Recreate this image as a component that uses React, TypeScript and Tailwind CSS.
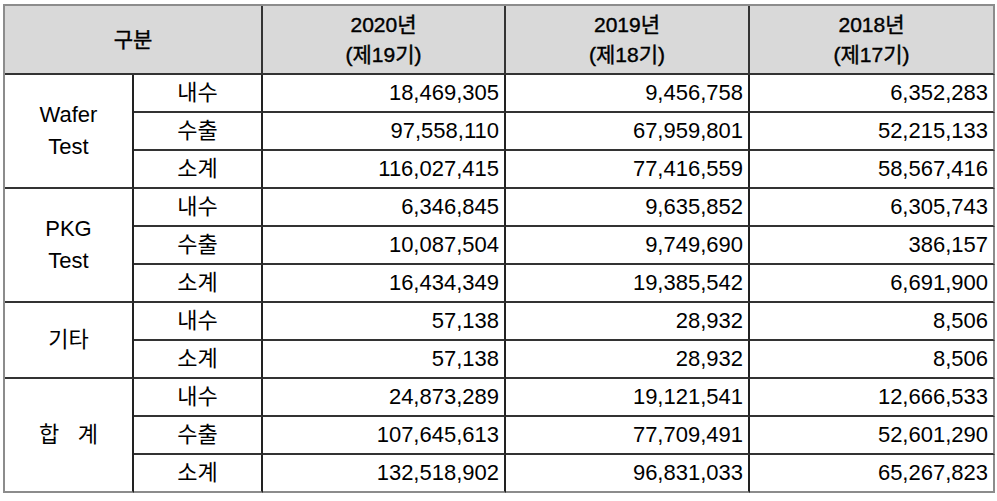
import React from "react"

type Row = { label: string; v: [string, string, string] }
type Group = { name: React.ReactNode; rows: Row[] }

const groups: Group[] = [
  {
    name: (
      <>
        Wafer
        <br />
        Test
      </>
    ),
    rows: [
      { label: "내수", v: ["18,469,305", "9,456,758", "6,352,283"] },
      { label: "수출", v: ["97,558,110", "67,959,801", "52,215,133"] },
      { label: "소계", v: ["116,027,415", "77,416,559", "58,567,416"] },
    ],
  },
  {
    name: (
      <>
        PKG
        <br />
        Test
      </>
    ),
    rows: [
      { label: "내수", v: ["6,346,845", "9,635,852", "6,305,743"] },
      { label: "수출", v: ["10,087,504", "9,749,690", "386,157"] },
      { label: "소계", v: ["16,434,349", "19,385,542", "6,691,900"] },
    ],
  },
  {
    name: "기타",
    rows: [
      { label: "내수", v: ["57,138", "28,932", "8,506"] },
      { label: "소계", v: ["57,138", "28,932", "8,506"] },
    ],
  },
  {
    name: <span className="whitespace-pre">합   계</span>,
    rows: [
      { label: "내수", v: ["24,873,289", "19,121,541", "12,666,533"] },
      { label: "수출", v: ["107,645,613", "77,709,491", "52,601,290"] },
      { label: "소계", v: ["132,518,902", "96,831,033", "65,267,823"] },
    ],
  },
]

const years = [
  ["2020년", "(제19기)"],
  ["2019년", "(제18기)"],
  ["2018년", "(제17기)"],
]

export default function App() {
  const font = "font-['Liberation_Sans','Noto_Sans_CJK_KR',sans-serif]"
  return (
    <div className={`w-[997px] h-[501px] bg-white pt-[4px] pl-[3px] text-black ${font}`}>
      <table className="table-fixed border-separate border-spacing-0 border-t-2 border-l-2 border-[#8c8c8c] text-[22px] leading-none">
        <colgroup>
          <col className="w-[129px]" />
          <col className="w-[129px]" />
          <col className="w-[243px]" />
          <col className="w-[244px]" />
          <col className="w-[245px]" />
        </colgroup>
        <thead>
          <tr className="h-[69px] bg-[#d9d9d9]">
            <th
              colSpan={2}
              className="border-r-2 border-b-2 border-[#333] font-normal text-[21px] [-webkit-text-stroke:0.4px_#000]"
            >
              구분
            </th>
            {years.map(([y, p], i) => (
              <th
                key={y}
                className={`border-b-2 border-[#333] font-normal text-[21px] leading-[30px] [-webkit-text-stroke:0.4px_#000] ${
                  i === 2 ? "border-r-2 border-r-[#8c8c8c]" : "border-r-2"
                }`}
              >
                {y}
                <br />
                {p}
              </th>
            ))}
          </tr>
        </thead>
        <tbody>
          {groups.map((g, gi) =>
            g.rows.map((r, ri) => {
              const lastRow = gi === groups.length - 1 && ri === g.rows.length - 1
              const bottom = lastRow ? "border-b-2 border-b-[#8c8c8c]" : "border-b-2 border-b-[#333]"
              return (
                <tr key={`${gi}-${ri}`} className="h-[38px]">
                  {ri === 0 && (
                    <td
                      rowSpan={g.rows.length}
                      className={`text-center font-normal leading-[32px] border-r-2 border-r-[#222] ${
                        gi === groups.length - 1 ? "border-b-2 border-b-[#8c8c8c]" : "border-b-2 border-b-[#333]"
                      }`}
                    >
                      {g.name}
                    </td>
                  )}
                  <td className={`text-center border-r-2 border-r-[#222] ${bottom}`}>{r.label}</td>
                  {r.v.map((v, vi) => (
                    <td
                      key={vi}
                      className={`text-right pr-[5px] border-r-2 ${
                        vi === 2 ? "border-r-[#8c8c8c]" : "border-r-[#222]"
                      } ${bottom}`}
                    >
                      {v}
                    </td>
                  ))}
                </tr>
              )
            })
          )}
        </tbody>
      </table>
    </div>
  )
}
